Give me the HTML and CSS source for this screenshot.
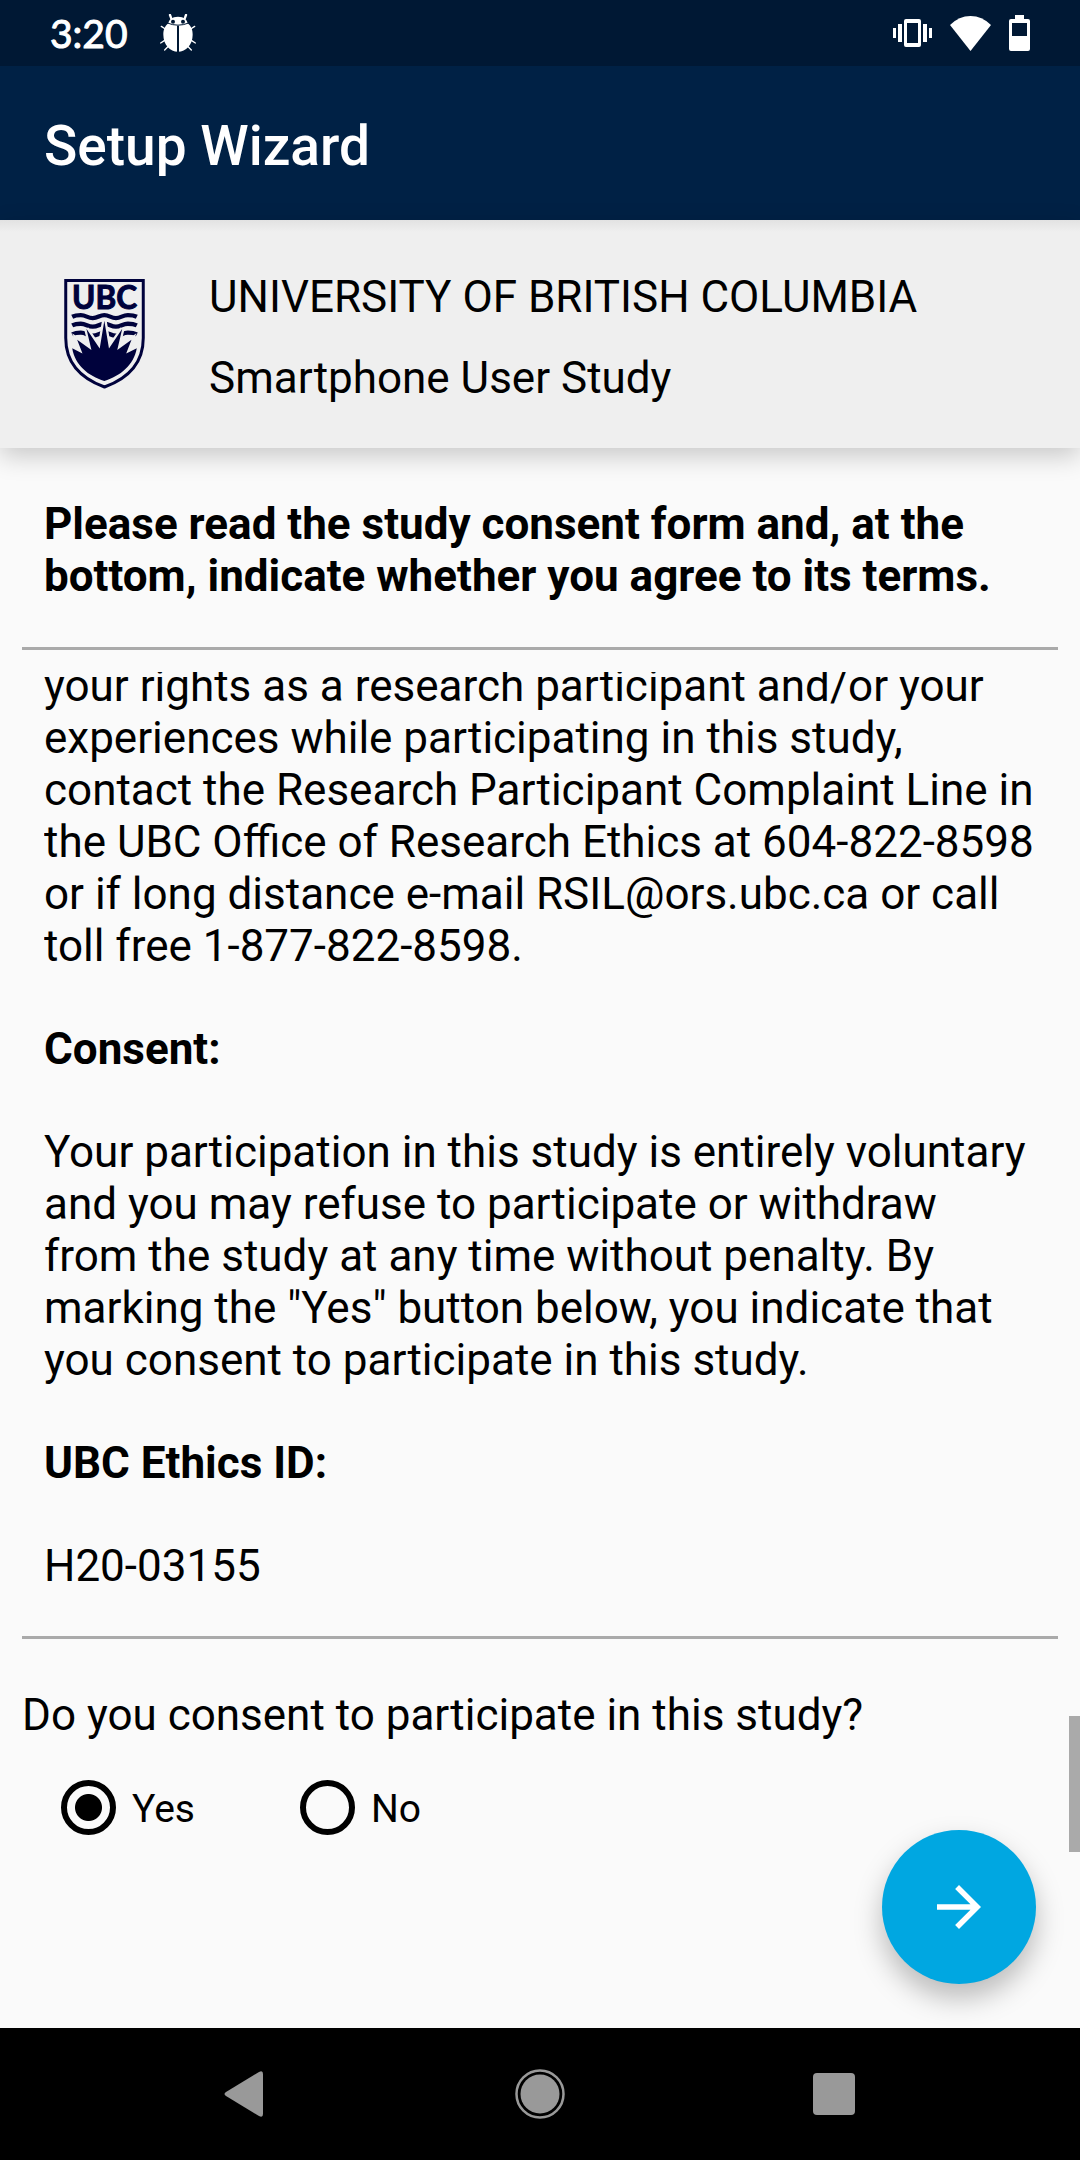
FILE: index.html
```html
<!DOCTYPE html>
<html lang="en">
<head>
<meta charset="utf-8">
<meta name="viewport" content="width=device-width, initial-scale=1">
<title>Setup Wizard</title>
<link rel="stylesheet" href="styles.css">
</head>
<body>
<div class="app">
  <div class="status-bar">
    <div class="status-left">
      <span class="clock">3:20</span>
      <svg class="bug-icon" viewBox="0 0 108 114" aria-hidden="true">
        <g fill="none" stroke="#fff" stroke-width="4" stroke-linecap="round">
          <path stroke-width="7" d="M30 3 34 14M78 3 74 14"/>
          <path d="M4 37 16 45M104 37 92 45M2 87 14 79M106 87 94 79M14 108 25 97M94 108 83 97"/>
        </g>
        <path fill="#fff" d="M54 8C72 8 82 18 83 28C95 38 98 50 98 62C98 92 78 113 54 113S10 92 10 62C10 50 13 38 25 28C26 18 36 8 54 8Z"/>
        <path fill="none" stroke="#001834" stroke-width="3" d="M22 27Q54 40 86 27"/>
        <path fill="none" stroke="#001834" stroke-width="6" d="M54 35V114"/>
        <circle cx="39" cy="23" r="6" fill="#001834"/><circle cx="69" cy="23" r="6" fill="#001834"/>
      </svg>
    </div>
    <div class="status-right">
      <svg class="vibrate-icon" viewBox="0 0 39 28" aria-hidden="true">
        <path fill="#fff" fill-rule="evenodd" d="M13 0H26Q28 0 28 2V26Q28 28 26 28H13Q11 28 11 26V2Q11 0 13 0ZM14 4V24H25V4Z"/>
        <path fill="#fff" d="M0 9H3V19H0ZM5 5H9V23H5ZM30 5H34V23H30ZM36 9H39V19H36Z"/>
      </svg>
      <svg class="wifi-icon" viewBox="0 0 41 35" aria-hidden="true"><path fill="#fff" d="M0 9Q9 0 20.500 0T41 9L20.500 35Z"/></svg>
      <svg class="battery-icon" viewBox="0 0 21 36" aria-hidden="true"><path fill="#fff" fill-rule="evenodd" d="M6 0H15V4H19Q21 4 21 6V34Q21 36 19 36H2Q0 36 0 34V6Q0 4 2 4H6ZM3 8V21H18V8Z"/></svg>
    </div>
  </div>
  <header class="app-bar"><h1 class="app-title">Setup Wizard</h1></header>
  <section class="study-header">
    <svg class="logo" viewBox="72 54 243 332" role="img" aria-label="UBC">
      <path fill="none" stroke="#00023c" stroke-width="9" d="M76.500 58.500H310.500V232C310.500 310 262 355 193.500 380C125 355 76.500 310 76.500 232Z"/>
      <text class="logo-text" x="193.500" y="144" text-anchor="middle">UBC</text>
      <g fill="none" stroke="#00023c" stroke-width="13">
        <path d="M96 168C104 164 112 163 122 163C138 163 142 172 158 172S178 163 193 163S213 172 228 172S248 163 264 163C274 163 283 164 291 168"/>
        <path d="M96 194C104 190 112 189 122 189C138 189 142 198 158 198S178 189 193 189S213 198 228 198S248 189 264 189C274 189 283 190 291 194"/>
        <path d="M96 221C104 217 112 216 122 216C138 216 142 225 158 225S178 216 193 216S213 225 228 225S248 216 264 216C274 216 283 217 291 221"/>
      </g>
      <path fill="#00023c" stroke="#efefef" stroke-width="14" paint-order="stroke" stroke-linejoin="miter" d="M96 263 127 279 111 237 154 268 139 204 179 264 193 180 207 264 247 204 232 268 275 237 259 279 291 263C281 315 242 346 193 362C144 346 105 315 96 263Z"/>
    </svg>
    <div class="study-names">
      <p>UNIVERSITY OF BRITISH COLUMBIA</p>
      <p>Smartphone User Study</p>
    </div>
  </section>
  <main class="content">
    <h2 class="instructions">Please read the study consent form and, at the bottom, indicate whether you agree to its terms.</h2>
    <div class="consent-frame">
      <div class="consent-scroll">
        <div class="consent-text">
          <p>your rights as a research participant and/or your experiences while participating in this study, contact the Research Participant Complaint Line in the UBC Office of Research Ethics at 604-822-8598 or if long distance e-mail RSIL@ors.ubc.ca or call toll free 1-877-822-8598.</p>
          <h3>Consent:</h3>
          <p>Your participation in this study is entirely voluntary and you may refuse to participate or withdraw from the study at any time without penalty. By marking the "Yes" button below, you indicate that you consent to participate in this study.</p>
          <h3>UBC Ethics ID:</h3>
          <p>H20-03155</p>
        </div>
      </div>
    </div>
    <fieldset class="question">
      <legend>Do you consent to participate in this study?</legend>
      <div class="options">
        <label class="option"><input type="radio" name="consent" value="yes" checked><span>Yes</span></label>
        <label class="option"><input type="radio" name="consent" value="no"><span>No</span></label>
      </div>
    </fieldset>
    <div class="scroll-thumb"></div>
    <button class="fab" type="button" aria-label="Next">
      <svg class="fab-icon" viewBox="0 0 24 24" aria-hidden="true"><path fill="#fff" d="M12 4 10.590 5.410 16.170 11H4v2h12.170l-5.580 5.590L12 20l8-8z"/></svg>
    </button>
  </main>
  <nav class="nav-bar">
    <button class="nav-button" type="button" aria-label="Back"><svg viewBox="0 0 66 66" aria-hidden="true"><path fill="#999" d="M13 31 46 11Q50 9 50 13V53Q50 57 46 55L13 35Q10 33 13 31Z"/></svg></button>
    <button class="nav-button" type="button" aria-label="Home"><svg viewBox="0 0 66 66" aria-hidden="true"><circle cx="33" cy="33" r="19.500" fill="#999"/><circle cx="33" cy="33" r="23.500" fill="none" stroke="#999" stroke-width="2.500"/></svg></button>
    <button class="nav-button" type="button" aria-label="Recent apps"><svg viewBox="0 0 66 66" aria-hidden="true"><rect x="12" y="12" width="42" height="42" rx="4" fill="#999"/></svg></button>
  </nav>
</div>
</body>
</html>
```
FILE: styles.css
```css
* { box-sizing: border-box; }
body, h1, h2, h3, p, fieldset, legend { margin: 0; padding: 0; }
body {
  font-family: Roboto, "Liberation Sans", sans-serif;
  font-size: 44px;
  line-height: 52px;
  color: #000;
  background: #fafafa;
}
.app { display: flex; flex-direction: column; height: 100vh; }

.status-bar {
  display: flex;
  justify-content: space-between;
  align-items: center;
  height: 66px;
  padding: 0 50px;
  background: #001834;
}
.status-left { display: flex; align-items: center; gap: 32px; }
.clock {
  font-family: Lato, Roboto, sans-serif;
  font-size: 39px;
  color: #fff;
  -webkit-text-stroke: 1px #fff;
}
.bug-icon { width: 36px; height: 38px; }
.status-right { display: flex; align-items: center; gap: 18px; }
.vibrate-icon { width: 39px; height: 28px; }
.wifi-icon { width: 41px; height: 35px; }
.battery-icon { width: 21px; height: 36px; }

.app-bar { display: flex; align-items: center; height: 154px; padding: 6px 44px 0; background: #002145; }
.app-title { font-size: 55px; font-weight: 500; line-height: 64px; color: #fff; }

.study-header {
  display: flex;
  align-items: center;
  gap: 64px;
  height: 228px;
  padding: 0 64px;
  background: linear-gradient(#e2e2e2, #efefef 12px);
  box-shadow: 0 8px 24px rgba(0, 0, 0, 0.2);
  z-index: 1;
}
.logo { width: 81px; height: 110px; }
.logo-text {
  font-family: Lato, sans-serif;
  font-size: 95px;
  font-weight: 700;
  fill: #00023c;
  stroke: #00023c;
  stroke-width: 3px;
}
.study-names { display: flex; flex-direction: column; gap: 29px; padding-top: 6px; }

.content { position: relative; flex: 1; min-height: 0; display: flex; flex-direction: column; padding: 0 22px; }
.instructions { padding: 50px 22px 45px; font-size: 44px; font-weight: 700; }
.consent-frame {
  flex: 1;
  min-height: 0;
  display: flex;
  padding: 22px;
  border-top: 3px solid #aaa;
  border-bottom: 3px solid #aaa;
}
.consent-scroll { flex: 1; display: flex; flex-direction: column; justify-content: flex-end; overflow: hidden; }
.consent-text { display: flex; flex-direction: column; gap: 51px; padding-bottom: 22px; }
.consent-text h3 { font-size: 44px; font-weight: 700; }

.question { border: 0; padding-bottom: 155px; }
.question legend { padding-top: 50px; }
.options { display: flex; gap: 88px; padding: 22px; }
.option { display: flex; align-items: center; height: 88px; font-size: 39px; }
.option span { padding-top: 4px; }
.option input {
  appearance: none;
  width: 55px;
  height: 55px;
  margin: 0 16px 0 17px;
  border: 6px solid #000;
  border-radius: 50%;
}
.option input:checked { background: radial-gradient(circle, #000 13px, transparent 14px); }

.scroll-thumb { position: absolute; right: 0; bottom: 176px; width: 11px; height: 136px; background: #aaa; }
.fab {
  position: absolute;
  right: 44px;
  bottom: 44px;
  display: flex;
  align-items: center;
  justify-content: center;
  width: 154px;
  height: 154px;
  padding: 0;
  border: 0;
  border-radius: 50%;
  background: #00a7e1;
  box-shadow: 0 14px 28px rgba(0, 0, 0, 0.26);
}
.fab-icon { width: 66px; height: 66px; }

.nav-bar { display: flex; justify-content: center; align-items: center; gap: 228px; height: 132px; background: #000; }
.nav-button { width: 66px; height: 66px; padding: 0; border: 0; background: none; }
.nav-button svg { display: block; width: 66px; height: 66px; }
```
